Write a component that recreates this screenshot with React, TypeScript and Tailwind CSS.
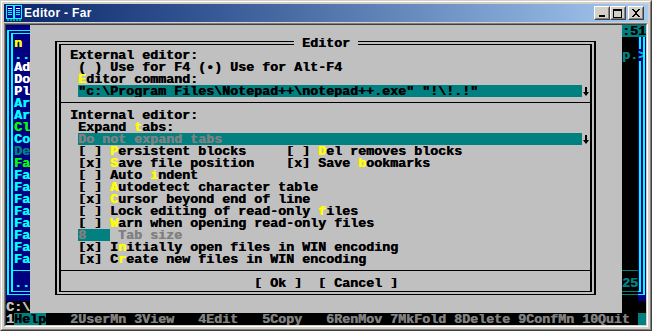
import React from 'react';

const mono =
  "font-['Liberation_Mono',monospace] font-bold text-[13.333px] leading-[14px] whitespace-pre [text-shadow:0.5px_0_0_currentColor]";

function H({ children }: { children: React.ReactNode }) {
  return <span className="text-[#ffff00]">{children}</span>;
}

// brackets are squashed a little so rows don't run together like one line
function Br({ children }: { children: React.ReactNode }) {
  return <span className="inline-block scale-y-[0.78]">{children}</span>;
}

function Row({ children, className = '' }: { children?: React.ReactNode; className?: string }) {
  return <div className={`h-[12px] ${className}`}>{children}</div>;
}

function Sep({ color }: { color: string }) {
  return (
    <div className="h-[12px] pt-[5px]">
      <div className={`h-px ${color}`} />
    </div>
  );
}

function DownArrow() {
  return (
    <svg width="8" height="12" viewBox="0 0 8 12" className="inline-block align-top">
      <rect x="3" y="2" width="2" height="6" fill="#000" />
      <path d="M1 7h6l-3 4z" fill="#000" />
    </svg>
  );
}

function CapBtn({ children }: { children: React.ReactNode }) {
  return (
    <div className="w-[16px] h-[14px] bg-[#d4d0c8] border border-t-white border-l-white border-r-[#404040] border-b-[#404040]">
      <div className="w-full h-full border border-transparent border-r-[#808080] border-b-[#808080] flex items-center justify-center">
        {children}
      </div>
    </div>
  );
}

function TitleBar() {
  return (
    <div className="h-[18px] flex items-center bg-linear-to-r from-[#0a246a] to-[#a6caf0] pl-[2px] pr-[4px]">
      <svg width="16" height="16" viewBox="0 0 16 16">
        <rect x="0.5" y="0.5" width="15" height="13" fill="#0000a8" stroke="#00ffff" />
        <rect x="7" y="1" width="2" height="12" fill="#00ffff" />
        <rect x="2" y="3" width="4" height="1" fill="#ffffff" />
        <rect x="2" y="5" width="4" height="1" fill="#00ffff" />
        <rect x="2" y="7" width="4" height="1" fill="#00ffff" />
        <rect x="2" y="9" width="4" height="1" fill="#00ffff" />
        <rect x="10" y="3" width="4" height="1" fill="#ffffff" />
        <rect x="10" y="5" width="4" height="1" fill="#00ffff" />
        <rect x="10" y="7" width="4" height="1" fill="#00ffff" />
        <rect x="10" y="9" width="4" height="1" fill="#00ffff" />
        <rect x="1" y="14" width="2" height="2" fill="#00a8a8" />
        <rect x="4" y="14" width="2" height="2" fill="#00a8a8" />
        <rect x="7" y="14" width="2" height="2" fill="#00a8a8" />
        <rect x="10" y="14" width="2" height="2" fill="#00a8a8" />
        <rect x="13" y="14" width="2" height="2" fill="#00a8a8" />
      </svg>
      <span className="ml-[2px] text-white font-bold text-[12px] leading-[12px] tracking-[0.3px] font-['Liberation_Sans',Arial,sans-serif]">
        Editor - Far
      </span>
      <div className="ml-auto flex">
        <CapBtn>
          <svg width="10" height="8" viewBox="0 0 10 8">
            <rect x="2" y="6" width="6" height="2" fill="#000" />
          </svg>
        </CapBtn>
        <CapBtn>
          <svg width="10" height="9" viewBox="0 0 10 9">
            <rect x="0.5" y="1.5" width="8" height="7" fill="none" stroke="#000" />
            <rect x="0" y="0" width="9" height="2" fill="#000" />
          </svg>
        </CapBtn>
        <div className="w-[2px]" />
        <CapBtn>
          <svg width="10" height="8" viewBox="0 0 10 8">
            <path d="M1 0h2v1h1v1h2V1h1V0h2v1H8v1H7v1H6v2h1v1h1v1h1v1H7V7H6V6H4v1H3v1H1V7h1V6h1V5h1V3H3V2H2V1H1z" fill="#000" />
          </svg>
        </CapBtn>
      </div>
    </div>
  );
}

const panelRows: [string, string][] = [
  ['n', 'text-[#ffff00]'],
  ['..', 'text-[#00ffff]'],
  ['Ad', 'text-white'],
  ['Do', 'text-white'],
  ['Pl', 'text-white'],
  ['Ar', 'text-[#00ffff]'],
  ['Ar', 'text-[#00ffff]'],
  ['Cl', 'text-[#00ff00]'],
  ['Co', 'text-[#00ffff]'],
  ['De', 'text-[#008080]'],
  ['Fa', 'text-[#00ff00]'],
  ['Fa', 'text-[#00ffff]'],
  ['Fa', 'text-[#00ffff]'],
  ['Fa', 'text-[#00ffff]'],
  ['Fa', 'text-[#00ffff]'],
  ['Fa', 'text-[#00ffff]'],
  ['Fa', 'text-[#00ffff]'],
  ['Fa', 'text-[#00ffff]'],
  ['Fa', 'text-[#00ffff]'],
];

function LeftStrip() {
  return (
    <div className="w-[24px] flex flex-col">
      <div className="h-[276px] bg-[#000080] pt-[5px] pl-[1px]">
        <div className="h-[265px] border-l-2 border-y border-[#00ffff] pt-[2px] pl-[2px]">
          <div className="h-[259px] border-l-2 border-y border-[#00ffff] pt-[3px]">
            {panelRows.map(([t, c], i) => (
              <Row key={i} className={`pl-[1px] ${c}`}>
                {t}
              </Row>
            ))}
            <Sep color="bg-[#00ffff]" />
            <Row className="pl-[1px] text-[#00ffff]">..</Row>
          </div>
        </div>
      </div>
      <Row className="text-[#c0c0c0]">{'C:\\'}</Row>
    </div>
  );
}

function RightStrip() {
  return (
    <div className="w-[24px] flex flex-col relative">
      <Row className="bg-[#008080] text-black">:51</Row>
      <div className="flex">
        <div className="w-[16px] flex flex-col text-[#008080]">
          <Row />
          <Row>p.</Row>
          {Array.from({ length: 17 }).map((_, i) => (
            <Row key={i} />
          ))}
          <Sep color="bg-[#008080]" />
          <Row>25</Row>
          <div className="h-[12px] pt-[2px]">
            <div className="h-px bg-[#008080]" />
            <div className="h-px mt-[2px] bg-[#008080]" />
          </div>
          <Row />
        </div>
        <div className="w-[8px] flex flex-col">
          <div className="h-[264px] bg-[#000080]">
            <div className="w-[7px] h-[258px] border-r-2 border-b border-[#00ffff] pr-[2px] pb-[2px]">
              <div className="w-[3px] h-[255px] border-r-2 border-b border-[#00ffff]" />
            </div>
          </div>
          <Row />
        </div>
      </div>
      <span className="absolute left-[16px] top-[24px] w-[5px] h-[12px] bg-[#000080] text-[#00c0c0] overflow-hidden">&gt;</span>
    </div>
  );
}

function Box({ on }: { on?: boolean }) {
  return (
    <>
      <Br>[</Br>
      {on ? 'x' : ' '}
      <Br>]</Br>
      {' '}
    </>
  );
}

function Check({ on, children }: { on?: boolean; children: React.ReactNode }) {
  return (
    <Row className="pl-[17px]">
      <Box on={on} />
      {children}
    </Row>
  );
}

function Dialog() {
  return (
    <div className="w-[592px] h-[288px] bg-[#c0c0c0] text-black relative pt-[16px] pl-[25px]">
      <div className="w-[541px] h-[254px] border-x-2 border-y border-black p-[2px]">
        <div className="w-[533px] h-[248px] border-x-2 border-y border-black pt-[4px]">
          <Row className="pl-[9px]">External editor:</Row>
          <Row className="pl-[17px]">( ) Use for F4 (•) Use for Alt-F4</Row>
          <Row className="pl-[17px]">
            <H>E</H>ditor command:
          </Row>
          <Row className="pl-[17px]">
            <span className="inline-block align-top w-[504px] h-[12px] bg-[#008080] overflow-hidden">
              {'"c:\\Program Files\\Notepad++\\notepad++.exe" "!\\!.!"'}
            </span>
            <DownArrow />
          </Row>
          <Sep color="bg-black" />
          <Row className="pl-[9px]">Internal editor:</Row>
          <Row className="pl-[17px]">
            Expand <H>t</H>abs:
          </Row>
          <Row className="pl-[17px]">
            <span className="inline-block align-top w-[504px] h-[12px] bg-[#008080] text-[#808080] overflow-hidden">
              Do not expand tabs
            </span>
            <DownArrow />
          </Row>
          <Check>
            <H>P</H>ersistent blocks{'     '}
            <Box />
            <H>D</H>el removes blocks
          </Check>
          <Check on>
            <H>S</H>ave file position{'    '}
            <Box on />
            Save <H>b</H>ookmarks
          </Check>
          <Check>
            Auto <H>i</H>ndent
          </Check>
          <Check>
            <H>A</H>utodetect character table
          </Check>
          <Check on>
            <H>C</H>ursor beyond end of line
          </Check>
          <Check>
            Lock editing of read-only <H>f</H>iles
          </Check>
          <Check>
            <H>W</H>arn when opening read-only files
          </Check>
          <Row className="pl-[17px] text-[#808080]">
            <span className="inline-block align-top w-[32px] h-[12px] bg-[#008080] overflow-hidden">8</span>
            {' Tab size'}
          </Row>
          <Check on>
            I<H>n</H>itially open files in WIN encoding
          </Check>
          <Check on>
            C<H>r</H>eate new files in WIN encoding
          </Check>
          <Sep color="bg-black" />
          <Row className="pl-[193px]">
            <Br>[</Br>
            {' Ok '}
            <Br>]</Br>
            {'  '}
            <Br>[</Br>
            {' Cancel '}
            <Br>]</Br>
          </Row>
        </div>
      </div>
      <span className="absolute left-[264px] top-[12px] h-[12px] bg-[#c0c0c0] overflow-hidden"> Editor </span>
    </div>
  );
}

function KeyBar() {
  return (
    <Row>
      <span className="text-[#c0c0c0]">1</span>
      <span className="inline-block align-top h-[12px] bg-[#008080] text-black overflow-hidden">Help</span>
      <span className="text-[#808080]">
        {'   2UserMn 3View   4Edit   5Copy   6RenMov 7MkFold 8Delete 9ConfMn 10Quit '}
      </span>
      <span className="inline-block align-top w-[8px] h-[12px] bg-[#008080]" />
    </Row>
  );
}

export default function App() {
  return (
    <div className="w-[652px] h-[331px] bg-[#d4d0c8] overflow-hidden">
      <div className="w-full h-full border border-t-[#d4d0c8] border-l-[#d4d0c8] border-r-[#404040] border-b-[#404040]">
        <div className="w-full h-full border border-t-white border-l-white border-r-[#808080] border-b-[#808080] p-[2px] flex flex-col">
          <TitleBar />
          <div className="h-px" />
          <div className="border border-t-[#808080] border-l-[#808080] border-r-white border-b-white">
            <div className="border border-t-[#404040] border-l-[#404040] border-r-[#d4d0c8] border-b-[#d4d0c8]">
              <div className={`w-[640px] h-[300px] bg-black flex flex-col overflow-hidden ${mono}`}>
                <div className="flex h-[288px]">
                  <LeftStrip />
                  <Dialog />
                  <RightStrip />
                </div>
                <KeyBar />
              </div>
            </div>
          </div>
        </div>
      </div>
    </div>
  );
}
